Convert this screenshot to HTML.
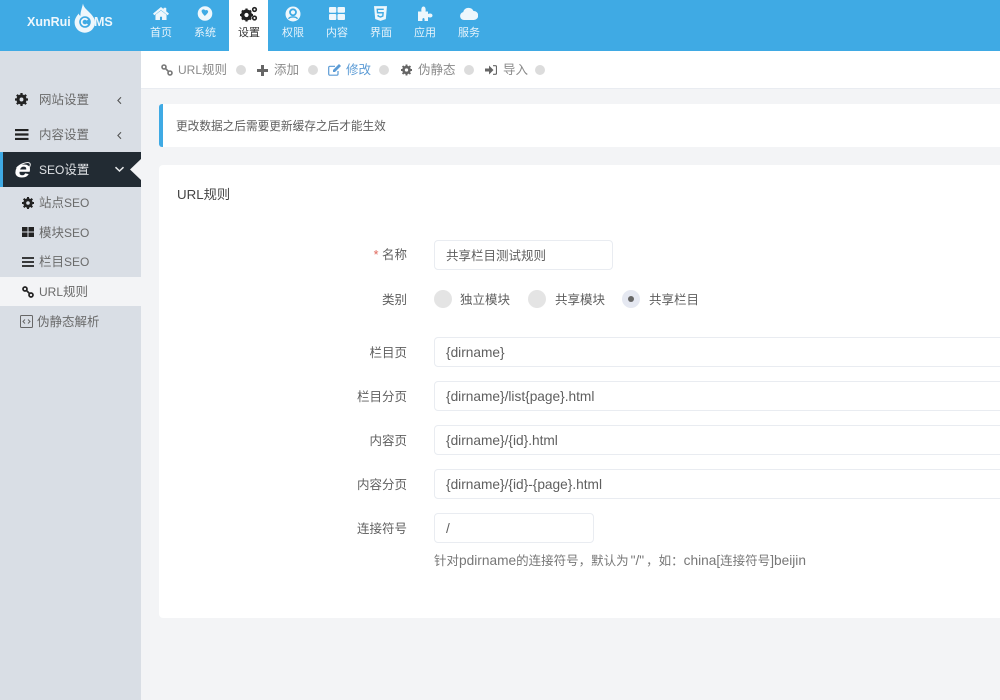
<!DOCTYPE html>
<html><head><meta charset="utf-8"><style>
html,body{margin:0;padding:0}
body{width:1000px;height:700px;overflow:hidden;position:relative;background:#f3f4f6;font-family:"Liberation Sans","Noto Sans CJK SC",sans-serif;font-size:12.500px;color:#5f5f5f}
#w{position:absolute;left:0;top:0;width:1000px;height:700px;filter:blur(.3px)}
.a{position:absolute;white-space:nowrap}
svg{position:absolute;display:block}
.l{font-size:13.700px}
.c{font-size:12px}
.nav{width:44px;text-align:center;top:26px;font-size:11px;line-height:14px;color:#e6f3fb}
.side{left:0;width:141px;background:#d9dee5}
.inp{position:absolute;left:434px;height:28px;border:1px solid #e9ecf1;border-radius:4px;background:#fff;line-height:29px;padding-left:11px;color:#5f5f5f;box-sizing:content-box}
.lab{right:593px;text-align:right;line-height:16px;color:#5f5f5f}
.dot{position:absolute;width:10px;height:10px;border-radius:50%;background:#dcdcdc;top:65px}
.rad{position:absolute;width:18px;height:18px;border-radius:50%;background:#e4e4e4;top:290px}
.m{color:#8a8a8a;line-height:16px;top:62px}
.s{color:#6a6a6a;line-height:16px}
</style></head><body><div id="w">
<div class="a" style="left:0;top:0;width:1000px;height:51px;background:#3faae4"></div>
<div class="a" style="left:229px;top:0;width:39px;height:51px;background:#fff"></div>
<div class="a" style="left:141px;top:51px;width:859px;height:38px;background:#fff;border-bottom:1px solid #e9ecf1;box-sizing:border-box"></div>
<div class="a side" style="top:51px;height:649px"></div>

<!-- logo -->
<div class="a" style="left:27px;top:14px;color:#eef7fc;font-weight:bold;font-size:12.500px;line-height:16px">XunRui</div>
<div class="a" style="left:94px;top:14px;color:#eef7fc;font-weight:bold;font-size:12.500px;line-height:16px">MS</div>
<svg style="left:74px;top:3px" width="22" height="30" viewBox="0 0 22 30"><path d="M9 .5c.5 3.500 3 5.500 6 8.500 3 3 6 6 6 10.500a10.200 10.200 0 0 1-20.400 0c0-4 2.400-6.800 4.200-9 .2 1.200.7 2 1.700 2.300C6.200 9.500 8 5 9 .5Z" fill="#eef7fc"/><circle cx="11" cy="19" r="5.800" fill="#3faae4"/><path d="M13.400 17a3.200 3.200 0 1 0 0 4" fill="none" stroke="#eef7fc" stroke-width="1.800"/></svg>

<!-- top nav icons -->
<svg style="left:153px;top:7px" width="16" height="13" viewBox="0 0 16 13"><path d="M8 .3.300 6.600 1.300 8 8 2.800 14.700 8l1-1.400L13 4.400V1h-2.200v1.600Z M2.700 7.800V13h4V9.500h2.600V13h4V7.800L8 3.800Z" fill="#eef7fc" stroke="#eef7fc" stroke-width=".5"/></svg>
<svg style="left:197px;top:6px" width="16" height="15" viewBox="0 0 16 15"><circle cx="8" cy="7.500" r="7.300" fill="#eef7fc"/><path d="M4.800 4.200c1-1.200 2.700-1 3.500.2.800-.8 2.500-.5 2.800.8.300 1.500-1.500 3-3.300 4.800C6.500 8.500 3.800 5.800 4.800 4.200Z" fill="#3faae4"/></svg>
<svg style="left:240px;top:6px" width="18" height="16" viewBox="0 0 18 16"><circle cx="6.500" cy="9" r="3.800" fill="none" stroke="#222" stroke-width="3.400"/><path d="M6.500 2.500v3M6.500 12.500v3M0 9h3M10 9h3M2 4.500l2 2M9 11.500l2 2M2 13.500l2-2M9 6.500l2-2" stroke="#222" stroke-width="2.200"/><circle cx="14.500" cy="3.500" r="1.800" fill="none" stroke="#222" stroke-width="1.600"/><circle cx="14.500" cy="12" r="1.800" fill="none" stroke="#222" stroke-width="1.600"/></svg>
<svg style="left:285px;top:6px" width="16" height="16" viewBox="0 0 16 16"><circle cx="8" cy="8" r="7.500" fill="#eef7fc"/><circle cx="8" cy="6.300" r="3" fill="none" stroke="#3faae4" stroke-width="1.800"/><path d="M3.500 12.800c1.500-2.500 7.500-2.500 9 0" fill="none" stroke="#3faae4" stroke-width="1.300"/></svg>
<svg style="left:329px;top:7px" width="16" height="13" viewBox="0 0 16 13"><g fill="#eef7fc"><rect width="7.300" height="5.800" rx="1"/><rect x="8.500" width="7.500" height="5.800" rx="1"/><rect y="7" width="7.300" height="6" rx="1"/><rect x="8.500" y="7" width="7.500" height="6" rx="1"/></g></svg>
<svg style="left:374px;top:6px" width="13" height="15" viewBox="0 0 14 16"><path d="M0 0h14l-1.300 14L7 16l-5.700-2Z" fill="#eef7fc"/><path d="M10.500 3.500h-7l.3 3.700h6l-.3 3.500L7 11.800l-2.500-1-.1-1.300" fill="none" stroke="#3faae4" stroke-width="1.500"/></svg>
<svg style="left:417px;top:6px" width="16" height="15" viewBox="0 0 16 15"><path d="M1 5.500h3.500C4 3.500 4.500.5 6.500.5S9 3.500 8.500 5.500H11V8c2-1 4.500-.5 4.500 1.500S13 12 11 11v4H7.500c.3-1.500 0-3-1-3s-1.300 1.500-1 3H1Z" fill="#eef7fc"/></svg>
<svg style="left:460px;top:7px" width="18" height="13" viewBox="0 0 18 13"><path d="M4 13a4 4 0 0 1-.8-7.900A5.500 5.500 0 0 1 13.500 4 4.500 4.500 0 0 1 14 13Z" fill="#eef7fc"/></svg>

<div class="a nav" style="left:139px">首页</div>
<div class="a nav" style="left:183px">系统</div>
<div class="a nav" style="left:227px;color:#333">设置</div>
<div class="a nav" style="left:271px">权限</div>
<div class="a nav" style="left:315px">内容</div>
<div class="a nav" style="left:359px">界面</div>
<div class="a nav" style="left:403px">应用</div>
<div class="a nav" style="left:447px">服务</div>

<!-- sidebar -->
<svg style="left:15px;top:93px" width="13" height="13" viewBox="0 0 14 14"><circle cx="7" cy="7" r="3.800" fill="none" stroke="#222" stroke-width="3.400"/><path d="M7 0v3M7 11v3M0 7h3M11 7h3M2 2l2 2M10 10l2 2M2 12l2-2M10 4l2-2" stroke="#222" stroke-width="2.400"/></svg>
<div class="a s" style="left:39px;top:92px">网站设置</div>
<svg style="left:116px;top:96px" width="7" height="9" viewBox="0 0 7 9"><path d="M5 1.300 1.900 4.500 5 7.700" fill="none" stroke="#555" stroke-width="1.100"/></svg>
<svg style="left:15px;top:129px" width="14" height="11" viewBox="0 0 14 11"><path d="M0 1h13.500M0 5.500h13.500M0 10h13.500" stroke="#222" stroke-width="2.200"/></svg>
<div class="a s" style="left:39px;top:127px">内容设置</div>
<svg style="left:116px;top:131px" width="7" height="9" viewBox="0 0 7 9"><path d="M5 1.300 1.900 4.500 5 7.700" fill="none" stroke="#555" stroke-width="1.100"/></svg>

<div class="a" style="left:0;top:152px;width:141px;height:35px;background:#222b33"></div>
<div class="a" style="left:0;top:152px;width:3px;height:35px;background:#3faae4"></div>
<svg style="left:130px;top:159px" width="11" height="21" viewBox="0 0 11 21"><path d="M11 0v21L0 10.500Z" fill="#f3f4f6"/></svg>
<svg style="left:12px;top:158px" width="22" height="24" viewBox="0 0 22 24"><text transform="translate(2.500 19.500) scale(1.220 1)" font-family="Liberation Sans" font-weight="bold" font-style="italic" font-size="24" fill="#fff">e</text><path d="M4.500 10C8 6 15 3.500 17.500 5c1.500 1 .5 3.500-.5 5" fill="none" stroke="#fff" stroke-width=".9"/></svg>
<div class="a" style="left:39px;top:162px;color:#dfe2e5;line-height:16px"><span class="c">SEO</span>设置</div>
<svg style="left:114px;top:166px" width="11" height="7" viewBox="0 0 11 7"><path d="M1.500 1.200 5.500 5 9.500 1.200" fill="none" stroke="#e8eaec" stroke-width="1.500"/></svg>

<svg style="left:22px;top:197px" width="12" height="12" viewBox="0 0 14 14"><circle cx="7" cy="7" r="3.800" fill="none" stroke="#222" stroke-width="3.400"/><path d="M7 0v3M7 11v3M0 7h3M11 7h3M2 2l2 2M10 10l2 2M2 12l2-2M10 4l2-2" stroke="#222" stroke-width="2.400"/></svg>
<div class="a s" style="left:39px;top:195px">站点<span class="c">SEO</span></div>
<svg style="left:22px;top:227px" width="12" height="10" viewBox="0 0 12 10"><g fill="#222"><rect width="5.500" height="4.500"/><rect x="6.500" width="5.500" height="4.500"/><rect y="5.500" width="5.500" height="4.500"/><rect x="6.500" y="5.500" width="5.500" height="4.500"/></g></svg>
<div class="a s" style="left:39px;top:225px">模块<span class="c">SEO</span></div>
<svg style="left:22px;top:257px" width="12" height="10" viewBox="0 0 12 10"><path d="M0 1h12M0 5h12M0 9h12" stroke="#222" stroke-width="1.700"/></svg>
<div class="a s" style="left:39px;top:254px">栏目<span class="c">SEO</span></div>
<div class="a" style="left:0;top:277px;width:141px;height:29px;background:#f3f4f6"></div>
<svg style="left:22px;top:286px" width="12" height="12" viewBox="0 0 12 12"><circle cx="3" cy="3" r="2" fill="none" stroke="#222" stroke-width="1.700"/><circle cx="9" cy="9" r="2" fill="none" stroke="#222" stroke-width="1.700"/><path d="M4.500 4.500l3 3" stroke="#222" stroke-width="1.700"/></svg>
<div class="a s" style="left:39px;top:284px"><span class="c">URL</span>规则</div>
<svg style="left:20px;top:315px" width="13" height="13" viewBox="0 0 13 13"><rect x=".5" y=".5" width="12" height="12" rx="1" fill="none" stroke="#666"/><path d="M5 4.500 3 6.500l2 2M8 4.500l2 2-2 2" fill="none" stroke="#666"/></svg>
<div class="a s" style="left:37px;top:314px">伪静态解析</div>

<!-- breadcrumb tabs -->
<svg style="left:161px;top:64px" width="12" height="12" viewBox="0 0 12 12"><circle cx="3" cy="3" r="2" fill="none" stroke="#777" stroke-width="1.600"/><circle cx="9" cy="9" r="2" fill="none" stroke="#777" stroke-width="1.600"/><path d="M4.500 4.500l3 3" stroke="#777" stroke-width="1.600"/></svg>
<div class="a m" style="left:178px"><span style="font-size:12px">URL</span>规则</div><div class="dot" style="left:236px"></div>
<svg style="left:257px;top:65px" width="11" height="11" viewBox="0 0 11 11"><path d="M5.500 0v11M0 5.500h11" stroke="#666" stroke-width="3"/></svg>
<div class="a m" style="left:274px">添加</div><div class="dot" style="left:308px"></div>
<svg style="left:328px;top:64px" width="13" height="12" viewBox="0 0 13 12"><path d="M10 7v3a1.200 1.200 0 0 1-1.200 1.200H2A1.200 1.200 0 0 1 .7 10V3.500A1.200 1.200 0 0 1 2 2.300h5" fill="none" stroke="#5b9bd5" stroke-width="1.200"/><path d="M5 6 11 0l2 2-6 6H5Z" fill="#5b9bd5"/></svg>
<div class="a m" style="left:346px;color:#5b9bd5">修改</div><div class="dot" style="left:379px"></div>
<svg style="left:401px;top:64px" width="11" height="12" viewBox="0 0 14 14"><circle cx="7" cy="7" r="3.800" fill="none" stroke="#666" stroke-width="3.400"/><path d="M7 0v3M7 11v3M0 7h3M11 7h3M2 2l2 2M10 10l2 2M2 12l2-2M10 4l2-2" stroke="#666" stroke-width="2.400"/></svg>
<div class="a m" style="left:418px">伪静态</div><div class="dot" style="left:464px"></div>
<svg style="left:485px;top:65px" width="12" height="10" viewBox="0 0 12 10"><path d="M0 3.500h4V.5L8.500 5 4 9.500v-3H0Z" fill="#666"/><path d="M8 .7h2.500a1 1 0 0 1 1 1v6.600a1 1 0 0 1-1 1H8" fill="none" stroke="#666" stroke-width="1.200"/></svg>
<div class="a m" style="left:503px">导入</div><div class="dot" style="left:535px"></div>

<!-- note -->
<div class="a" style="left:159px;top:104px;width:841px;height:43px;background:#fff;border-left:4px solid #3faae4;border-radius:3px 0 0 3px;box-sizing:border-box"></div>
<div class="a" style="left:176px;top:118.500px;font-size:11.670px;line-height:16px;color:#5f5f5f">更改数据之后需要更新缓存之后才能生效</div>

<!-- card -->
<div class="a" style="left:159px;top:165px;width:841px;height:453px;background:#fff;border-radius:4px 0 0 4px"></div>
<div class="a" style="left:177px;top:186px;font-size:13.300px;line-height:18px;color:#444">URL规则</div>

<div class="a lab" style="top:247px"><span style="color:#e0685c">* </span>名称</div>
<div class="inp" style="top:240px;width:166px;line-height:30px">共享栏目测试规则</div>
<div class="a lab" style="top:292px">类别</div>
<div class="rad" style="left:434px"></div><div class="a" style="left:460px;top:292px;line-height:16px">独立模块</div>
<div class="rad" style="left:528px"></div><div class="a" style="left:555px;top:292px;line-height:16px">共享模块</div>
<div class="rad" style="left:622px;background:#e5e8f1"></div><div class="a" style="left:628px;top:296px;width:6px;height:6px;border-radius:50%;background:#666"></div><div class="a" style="left:649px;top:292px;line-height:16px">共享栏目</div>

<div class="a lab" style="top:345px">栏目页</div>
<div class="inp l" style="top:337px;width:600px">{dirname}</div>
<div class="a lab" style="top:389px">栏目分页</div>
<div class="inp l" style="top:381px;width:600px">{dirname}/list{page}.html</div>
<div class="a lab" style="top:433px">内容页</div>
<div class="inp l" style="top:425px;width:600px">{dirname}/{id}.html</div>
<div class="a lab" style="top:477px">内容分页</div>
<div class="inp l" style="top:469px;width:600px">{dirname}/{id}-{page}.html</div>
<div class="a lab" style="top:521px">连接符号</div>
<div class="inp l" style="top:513px;width:147px">/</div>
<div class="a" style="left:434px;top:553px;line-height:16px;color:#777">针对<span class="l">pdirname</span>的连接符号，默认为<span class="l" style="margin:0 2px">"/"</span>，如：<span class="l">china[</span>连接符号<span class="l">]beijin</span></div>
</div></body></html>
